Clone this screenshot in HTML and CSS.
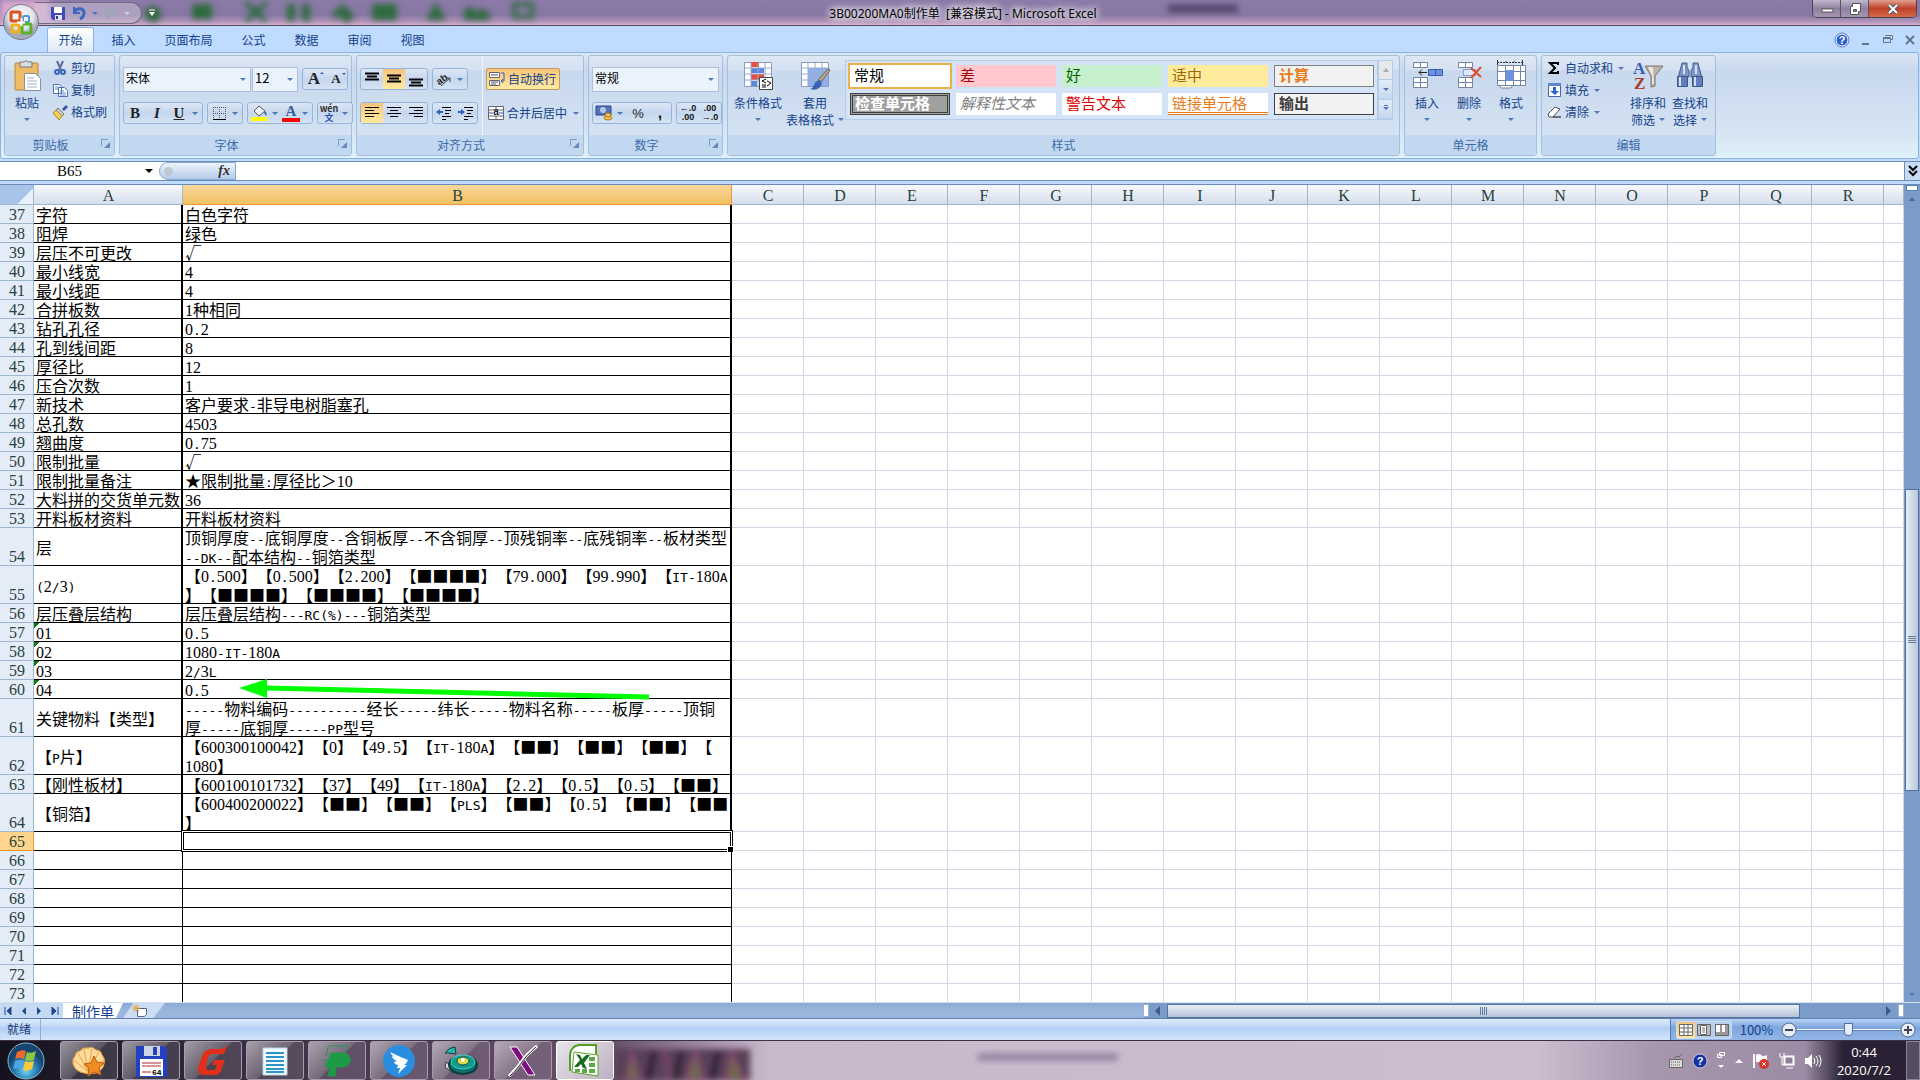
FILE: index.html
```html
<!DOCTYPE html>
<html lang="zh-CN">
<head>
    <meta charset="UTF-8">
    <meta name="viewport" content="width=device-width, initial-scale=1.0">
    <title>3B00200MA0制作单 [兼容模式] - Microsoft Excel</title>
    <link rel="stylesheet" href="styles.css">
</head>
<body>
    <header class="titlebar">
        <svg class="glass" width="1300" height="25" aria-hidden="true">
            <defs><filter id="soft" x="-20%" y="-50%" width="140%" height="200%"><feGaussianBlur stdDeviation="3"/></filter></defs>
            <g filter="url(#soft)">
                <path d="M0 0h50v25h-50z" fill="#d9a9cf"/>
                <g fill="#2d6b3c">
                    <circle cx="153" cy="14" r="8"/><path d="M192 4h20v15h-20z"/><path d="M246 3l20 18M266 3l-20 18" stroke="#2d6b3c" stroke-width="5"/>
                    <path d="M287 4h8v17h-8zM302 4h8v17h-8z"/><path d="M332 14l10-10 12 10-4 8h-6l-4-8-4 6z"/>
                    <path d="M372 4h25v16h-25z"/><path d="M426 20l10-18 10 18z"/><path d="M464 20v-10l6-4 6 6 6-4 8 6v6z"/>
                </g>
                <path d="M514 4h18v13h-18z" fill="none" stroke="#2d6b3c" stroke-width="4"/>
                <path d="M1168 5h70v7h-70z" fill="#4d4164"/>
            </g>
        </svg>
        <div class="quick">
            <button aria-label="保存"><svg width="16" height="16"><path d="M1 2h14v13H3l-2-2z" fill="#4448b8"/><path d="M4 2h8v6H4z" fill="#fff"/><path d="M5 10h7v5H5z" fill="#dfe4f4"/><path d="M6 11h2v3H6z" fill="#333a90"/></svg></button>
            <button aria-label="撤消"><svg width="16" height="16"><path d="M3 2v6h6" fill="none" stroke="#3c66c4" stroke-width="2"/><path d="M3 7c3-5 10-4 10 1 0 3-2 5-4 6" fill="none" stroke="#3c66c4" stroke-width="3"/></svg></button>
            <i class="arrow"></i>
            <button aria-label="恢复"><svg width="16" height="16"><path d="M12 2v6H6" fill="none" stroke="#9aa8b8" stroke-width="2"/><path d="M12 7C9 2 3 3 3 8c0 3 2 5 4 6" fill="none" stroke="#9aa8b8" stroke-width="2"/></svg></button>
            <i class="arrow pale"></i>
        </div>
        <button class="more" aria-label="自定义快速访问工具栏"><svg width="8" height="8"><path d="M1 1h6" stroke="#fff"/><path d="M1 3h6l-3 4z" fill="#fff"/></svg></button>
        <h1>3B00200MA0制作单&nbsp; [兼容模式] - Microsoft Excel</h1>
        <div class="winbtns">
            <button aria-label="最小化"><svg width="14" height="14"><rect x="2" y="7" width="11" height="3" fill="#fff" stroke="#555"/></svg></button>
            <button aria-label="还原"><svg width="14" height="14"><path d="M4.500 1.500h8v8h-2v3h-8v-8h2z" fill="#fff" stroke="#555"/><path d="M5.500 7.500h3v2h-3z" fill="#888" stroke="#555"/></svg></button>
            <button class="close" aria-label="关闭"><svg width="14" height="14"><path d="M3 3l8 8M11 3l-8 8" stroke="#555" stroke-width="4"/><path d="M3 3l8 8M11 3l-8 8" stroke="#fff" stroke-width="2"/></svg></button>
        </div>
    </header>
    <button class="office" aria-label="Office 按钮">
        <svg width="38" height="38" viewBox="0 0 38 38">
            <defs><radialGradient id="orb" cy=".35"><stop offset="0" stop-color="#fff"/><stop offset=".7" stop-color="#e3e5ec"/><stop offset="1" stop-color="#a7abb8"/></radialGradient></defs>
            <circle cx="19" cy="19" r="17.500" fill="url(#orb)" stroke="#737a8c"/>
            <g fill="none" stroke-width="3">
                <rect x="9" y="9" width="9" height="9" rx="1" stroke="#d9541e"/>
                <rect x="21" y="13" width="6" height="6" rx="1" stroke="#4b9bd8" stroke-width="2"/>
                <rect x="10" y="22" width="7" height="7" rx="1" stroke="#f0b01c"/>
                <rect x="20" y="21" width="9" height="9" rx="1" stroke="#5fae2c"/>
            </g>
            <path d="M15 19.500h8M19.500 15v8" stroke="#fff" stroke-width="2"/>
        </svg>
    </button>
    <nav class="tabs">
        <button class="active">开始</button>
        <button>插入</button>
        <button class="wide">页面布局</button>
        <button>公式</button>
        <button>数据</button>
        <button>审阅</button>
        <button>视图</button>
        <div class="docbtns">
            <button aria-label="帮助"><svg width="16" height="16"><circle cx="8" cy="8" r="6" fill="#2a5fd0" stroke="#fff"/><circle cx="8" cy="8" r="7" fill="none" stroke="#5b7fc0"/><text x="8" y="12" text-anchor="middle">?</text></svg></button>
            <button aria-label="最小化窗口"><svg width="12" height="12"><path d="M2 9h7v2H2z" fill="#66758c"/></svg></button>
            <button aria-label="还原窗口"><svg width="12" height="12"><path d="M3.500 2v-.5h7v4h-2M1.500 3.500h7v5h-7zM1 4.500h8" fill="none" stroke="#66758c"/></svg></button>
            <button aria-label="关闭窗口"><svg width="12" height="12"><path d="M2 2l8 8M10 2l-8 8" stroke="#66758c" stroke-width="2"/></svg></button>
        </div>
    </nav>

    <section class="ribbon">
        <div class="group clipboard">
            <div class="tools">
                <button class="big"><svg width="30" height="32"><rect x="3" y="3" width="23" height="27" rx="1" fill="#eebb66" stroke="#b8863c"/><path d="M8 2h4q2-3 4 0h4v5H8z" fill="#ddd" stroke="#777"/><path d="M12.500 13.500h11l5 5v12h-16z" fill="#fff" stroke="#8490a8"/><path d="M15 18h7M15 21h10M15 24h10M15 27h10" stroke="#9fb0cc"/></svg><span>粘贴</span><i class="arrow"></i></button>
                <div class="stack">
                    <button><svg width="16" height="16"><path d="M5 1l4 9M11 1L7 10" stroke="#5c6f94" stroke-width="2"/><circle cx="5" cy="12" r="2" fill="none" stroke="#3a66b8" stroke-width="2"/><circle cx="11" cy="12" r="2" fill="none" stroke="#3a66b8" stroke-width="2"/></svg>剪切</button>
                    <button><svg width="16" height="16"><path d="M1.500 2.500h6l2 2v7h-8zM6.500 5.500h6l3 3v6h-9z" fill="#fff" stroke="#4c70b4"/><path d="M3 5h4M3 7h3M8 9h4M8 11h6M8 13h6" stroke="#5c8ad0"/></svg>复制</button>
                    <button><svg width="16" height="16"><path d="M10 5l4-4 2 2-4 4z" fill="#3c50a0"/><path d="M6 4l6 6-2 2-6-6z" fill="#ccc" stroke="#777"/><path d="M4 6l6 6-3 4-6-7z" fill="#f2cf58" stroke="#a98a2c"/></svg>格式刷</button>
                </div>
            </div>
            <footer class="more-opts">剪贴板<i class="launch"></i></footer>
        </div>
        <div class="group font">
            <div class="tools lines">
                <div class="line">
                    <span class="combo name"><select aria-label="字体"><option>宋体</option></select></span>
                    <span class="combo size"><select aria-label="字号"><option>12</option></select></span>
                    <span class="set"><button class="serif grow" aria-label="增大字号">A<i class="tip up"></i></button><button class="serif shrink" aria-label="减小字号">A<i class="tip"></i></button></span>
                </div>
                <div class="line">
                    <span class="set biu"><button class="serif">B</button><button class="serif it">I</button><button class="serif un">U</button><i class="arrow"></i></span>
                    <span class="set"><button aria-label="边框"><svg width="16" height="16"><path d="M2 2.500h13M2 8.500h13M2.500 2v12M8.500 2v12M14.500 2v12" stroke="#555" stroke-dasharray="1 1"/><path d="M2 14.500h13" stroke="#000"/></svg></button><i class="arrow"></i></span>
                    <span class="set"><button aria-label="填充颜色"><svg width="18" height="16"><path d="M4 6l5-5 6 5-6 5z" fill="#eef2fa" stroke="#555"/><path d="M14 6q4 1 2 5l-2-3z" fill="#3f6fc4"/><path d="M1 12h16v4H1z" fill="#ff0"/></svg></button><i class="arrow"></i><button class="serif color" aria-label="字体颜色">A</button><i class="arrow"></i></span>
                    <span class="set"><button class="wen" aria-label="拼音"><b>wén</b><b>文</b></button><i class="arrow"></i></span>
                </div>
            </div>
            <footer class="more-opts">字体<i class="launch"></i></footer>
        </div>
        <div class="group align">
            <div class="tools">
                <div class="lines">
                    <div class="line">
                        <span class="set"><button aria-label="顶端对齐"><svg width="16" height="16"><path d="M1 2.500h14M3 5.500h10M1 8.500h14" stroke="#000" stroke-width="2"/></svg></button><button class="on" aria-label="垂直居中"><svg width="16" height="16"><path d="M1 4.500h14M3 7.500h10M1 10.500h14" stroke="#000" stroke-width="2"/></svg></button><button aria-label="底端对齐"><svg width="16" height="16"><path d="M1 8.500h14M3 11.500h10M1 14.500h14" stroke="#000" stroke-width="2"/></svg></button></span>
                        <span class="set"><button aria-label="方向"><svg width="18" height="16"><text x="1" y="11" class="ab" transform="rotate(-35 8 8)">ab</text><path d="M6 15l9-8M15 7v4M15 7h-4" stroke="#444" fill="none"/></svg></button><i class="arrow"></i></span>
                    </div>
                    <div class="line">
                        <span class="set"><button class="on" aria-label="左对齐"><svg width="16" height="16"><path d="M1 2.500h14M1 5.500h9M1 8.500h14M1 11.500h9" stroke="#000"/></svg></button><button aria-label="居中"><svg width="16" height="16"><path d="M1 2.500h14M4 5.500h8M1 8.500h14M4 11.500h8" stroke="#000"/></svg></button><button aria-label="右对齐"><svg width="16" height="16"><path d="M1 2.500h14M6 5.500h9M1 8.500h14M6 11.500h9" stroke="#000"/></svg></button></span>
                        <span class="set"><button aria-label="减少缩进"><svg width="16" height="16"><path d="M6 2.500h9M9 5.500h6M9 8.500h4M6 11.500h9M6 14.500h4" stroke="#000"/><path d="M0 7l4-3v6zM4 6h3v2H4z" fill="#2d5fc0"/></svg></button><button aria-label="增加缩进"><svg width="16" height="16"><path d="M6 2.500h9M9 5.500h6M9 8.500h4M6 11.500h9M6 14.500h4" stroke="#000"/><path d="M7 7L3 4v6zM0 6h3v2H0z" fill="#2d5fc0"/></svg></button></span>
                    </div>
                </div>
                <div class="lines texts">
                    <button class="on"><svg width="16" height="16"><path d="M.5 1.500h10v5H.5zM.5 9.500h10v5H.5z" fill="#fff" stroke="#667"/><path d="M2 4h7M2 11h7M2 13h5" stroke="#555"/><path d="M12 2h3v8h-3M14 8l-2 2 2 2" fill="none" stroke="#2d5fc0"/></svg>自动换行</button>
                    <button><svg width="16" height="16"><path d="M.5 1.500h15v13H.5zM.5 5h15M.5 11h15M8 1v4M8 11v4" fill="#fff" stroke="#667"/><path d="M1 8h4M15 8h-4" stroke="#2d5fc0"/><text x="8" y="10" text-anchor="middle" class="ab">a</text></svg>合并后居中<i class="arrow"></i></button>
                </div>
            </div>
            <footer class="more-opts">对齐方式<i class="launch"></i></footer>
        </div>
        <div class="group number">
            <div class="tools lines">
                <div class="line"><span class="combo"><select aria-label="数字格式"><option>常规</option></select></span></div>
                <div class="line">
                    <span class="set"><button aria-label="会计数字格式"><svg width="18" height="16"><path d="M1 1h15v9H1z" fill="#5574b8" stroke="#2c4684"/><circle cx="8" cy="5" r="3" fill="#b7c6e8"/><ellipse cx="13" cy="13" rx="4" ry="2" fill="#f3c64c" stroke="#a87920"/><ellipse cx="13" cy="10" rx="3" ry="2" fill="#f3c64c" stroke="#a87920"/></svg></button><i class="arrow"></i><button class="pct">%</button><button class="comma">,</button></span>
                    <span class="set"><button class="dec"><b>←.0</b><b>.00</b></button><button class="dec"><b>.00</b><b>→.0</b></button></span>
                </div>
            </div>
            <footer class="more-opts">数字<i class="launch"></i></footer>
        </div>
        <div class="group styles">
            <div class="tools">
                <button class="big"><svg width="32" height="32"><path d="M2.500 2.500h27v24h-27z" fill="#fff" stroke="#8a9cc0"/><path d="M9 2h8v5H9zM9 14h13v6H9z" fill="#e8503c"/><path d="M9 8h13v5H9zM9 21h6v5H9z" fill="#5b84dc"/><path d="M3 8h26M3 14h26M3 20h26M9 3v23M16 3v23M23 3v23" stroke="#9aaccc"/><path d="M17.500 17.500h13v12h-13z" fill="#fff" stroke="#444"/><path d="M24 19l-4 2 4 2M20 25h4M20 27h4M25 21l4 2-4 3" fill="none" stroke="#000"/></svg><span>条件格式</span><i class="arrow"></i></button>
                <button class="big"><svg width="32" height="32"><path d="M2.500 2.500h27v24h-27z" fill="#fff" stroke="#8a9cc0"/><path d="M9 8h20v18H9z" fill="#8fb0ec"/><path d="M3 8h26M3 14h26M3 20h26M9 3v23M16 3v23M23 3v23" stroke="#9aaccc"/><path d="M31 10l-9 12-3-2 10-11z" fill="#c9a77c" stroke="#666"/><path d="M21 20q-5 1-6 5-1 3-4 4 8 3 12-5z" fill="#3a63b4"/></svg><span>套用</span><span>表格格式<i class="arrow"></i></span></button>
                <div class="gallery">
                    <button class="normal">常规</button><button class="bad">差</button><button class="good">好</button><button class="neutral">适中</button><button class="calc">计算</button>
                    <button class="check">检查单元格</button><button class="explain">解释性文本</button><button class="warn">警告文本</button><button class="linked">链接单元格</button><button class="output">输出</button>
                </div>
                <div class="galnav"><button aria-label="上一行"><i class="arrow up"></i></button><button aria-label="下一行"><i class="arrow"></i></button><button aria-label="其他"><i class="arrow bar"></i></button></div>
            </div>
            <footer>样式</footer>
        </div>
        <div class="group cells">
            <div class="tools">
                <button class="big"><svg width="32" height="32"><path d="M2.500 2.500h14v5h-14zM2.500 17.500h14v10h-14zM2.500 22.500h14M9.500 2v5M9.500 18v9" fill="#fff" stroke="#7584a0"/><path d="M17.500 9.500h14v6h-14zM24.500 10v6" fill="#6d90e0" stroke="#3a5cac"/><path d="M8 12.500h8M8 12.500l3-3M8 12.500l3 3" stroke="#222"/></svg><span>插入</span><i class="arrow"></i></button>
                <button class="big"><svg width="32" height="32"><path d="M5.500 2.500h14v5h-14zM5.500 17.500h14v10h-14zM5.500 22.500h14M12.500 2v5M12.500 18v9" fill="#fff" stroke="#7584a0"/><path d="M10.500 9.500h12v6h-12z" fill="#dfe8fa" stroke="#3a5cac" stroke-dasharray="1 1"/><path d="M18 8l10 9M28 7L18 18" stroke="#e04a30" stroke-width="2"/></svg><span>删除</span><i class="arrow"></i></button>
                <button class="big"><svg width="32" height="32"><path d="M2.500 5.500h28v20h-28zM2 11.500h28M2 20.500h28M10.500 5v20M18.500 5v20M25.500 5v20M4 25l2 3h10l2-3" fill="#fff" stroke="#7584a0"/><path d="M11 10h8v11h-8z" fill="#6d90e0"/><path d="M2 2.500h26M2.500 0v5M27.500 0v5M10 2.500l2-2M20 2.500l-2-2" stroke="#333" stroke-dasharray="2 1"/></svg><span>格式</span><i class="arrow"></i></button>
            </div>
            <footer>单元格</footer>
        </div>
        <div class="group edit">
            <div class="tools">
                <div class="stack">
                    <button><svg width="16" height="16"><path d="M12 5V3H4l5 5-5 5h8v-2" fill="none" stroke="#000" stroke-width="2"/></svg>自动求和<i class="arrow"></i></button>
                    <button><svg width="16" height="16"><path d="M2.500 1.500h12v13h-12z" fill="#fff" stroke="#4467a8"/><path d="M2 1h13v3H2z" fill="#5d86cf"/><path d="M7 5h3v4h3l-4 4-5-4h3z" fill="#2e62d0"/></svg>填充<i class="arrow"></i></button>
                    <button><svg width="16" height="16"><path d="M2 10l7-7 5 2-7 8H3z" fill="#fff" stroke="#555"/><path d="M7 13h8" stroke="#000"/></svg>清除<i class="arrow"></i></button>
                </div>
                <button class="big"><svg width="32" height="32"><path d="M13 6h18l-8 10v10l-4 1V16z" fill="#b9b5ac" stroke="#77736c"/><path d="M16 7h5l1 17h-2V16z" fill="#e9e6df"/><text x="1" y="14" class="az">A</text><text x="2" y="29" class="az red">Z</text></svg><span>排序和</span><span>筛选<i class="arrow"></i></span></button>
                <button class="big"><svg width="32" height="32"><path d="M8 3h5v4l2 4v6h-4l-7 1 3-11zM24 3h-5v4l-2 4v6h4l7 1-3-11z" fill="#7d95c6" stroke="#45608f"/><path d="M3.500 16.500h10v10h-10zM18.500 16.500h10v10h-10z" fill="#5f7db8" stroke="#3c5588"/><path d="M6 17v9M21 17v9M10 5v9M22 5v9" stroke="#d4def4" stroke-width="2"/></svg><span>查找和</span><span>选择<i class="arrow"></i></span></button>
            </div>
            <footer>编辑</footer>
        </div>
    </section>

    <div class="formula">
        <input class="namebox" value="B65" aria-label="名称框"><i class="arrow black"></i>
        <div class="fx"><i class="knob"></i><button>fx</button></div>
        <input class="entry" aria-label="编辑栏">
        <button class="expand" aria-label="展开编辑栏"><svg width="10" height="12"><path d="M1 1l4 4 4-4M1 6l4 4 4-4" fill="none" stroke="#000" stroke-width="2"/></svg></button>
    </div>

    <main class="workspace">
        <div class="sheet">
            <table>
                <colgroup id="cols"></colgroup>
                <thead><tr id="heads"></tr></thead>
                <tbody id="rows"></tbody>
            </table>
            <svg class="note" width="420" height="30" aria-hidden="true"><path d="M28 11L411 20" stroke="#0f0" stroke-width="5"/><path d="M1 11L29 2v19z" fill="#0f0"/></svg>
        </div>
        <div class="vscroll">
            <i class="split"></i>
            <button aria-label="向上滚动"><i class="arrow up"></i></button>
            <div class="track"><div class="thumb"><svg width="8" height="8"><path d="M0 .5h8M0 2.500h8M0 4.500h8M0 6.500h8" stroke="#667c9c"/></svg></div></div>
            <button aria-label="向下滚动"><i class="arrow"></i></button>
        </div>
    </main>

    <div class="sheetbar">
        <div class="sheetnav">
            <button aria-label="第一张"><svg width="8" height="8"><path d="M1 0v8M7 0L3 4l4 4z" fill="#1f4a8c" stroke="#1f4a8c"/></svg></button>
            <button aria-label="上一张"><svg width="8" height="8"><path d="M6 0L2 4l4 4z" fill="#1f4a8c"/></svg></button>
            <button aria-label="下一张"><svg width="8" height="8"><path d="M2 0l4 4-4 4z" fill="#1f4a8c"/></svg></button>
            <button aria-label="最后一张"><svg width="8" height="8"><path d="M7 0v8M1 0l4 4-4 4z" fill="#1f4a8c" stroke="#1f4a8c"/></svg></button>
        </div>
        <button class="sheettab">制作单</button>
        <button class="newtab" aria-label="插入工作表"><svg width="16" height="14"><path d="M5.500 4.500h9v6l-2 2h-7z" fill="#fff" stroke="#55688c"/><path d="M4 0v8M0 4h8M1 1l6 6M7 1L1 7" stroke="#eaa52c"/></svg></button>
        <div class="hscroll">
            <i class="split"></i>
            <button aria-label="向左滚动"><svg width="8" height="10"><path d="M6 0L1 5l5 5z" fill="#3d5a88"/></svg></button>
            <div class="track"><div class="thumb"><svg width="8" height="8"><path d="M.5 0v8M2.500 0v8M4.500 0v8M6.500 0v8" stroke="#667c9c"/></svg></div></div>
            <button aria-label="向右滚动"><svg width="8" height="10"><path d="M1 0l5 5-5 5z" fill="#3d5a88"/></svg></button>
            <i class="split"></i>
        </div>
    </div>

    <div class="status">
        <span class="ready">就绪</span>
        <div class="zoom">
            <div class="views">
                <button class="on" aria-label="普通"><svg width="14" height="12"><path d="M.5.5h13v11H.5zM0 4h14M0 8h14M5 0v12M9 0v12" fill="#fff" stroke="#666"/></svg></button>
                <button aria-label="页面布局"><svg width="14" height="12"><path d="M.5.5h13v11H.5z" fill="#bbb" stroke="#666"/><path d="M3.500 1.500h6v9h-6z" fill="#fff" stroke="#666"/><path d="M5 4h3M5 6h3M5 8h3" stroke="#777"/></svg></button>
                <button aria-label="分页预览"><svg width="14" height="12"><path d="M.5.5h13v11H.5z" fill="#999" stroke="#666"/><path d="M1 1h4v7H1zM7 1h3v7H7z" fill="#fff"/></svg></button>
            </div>
            <button class="percent">100%</button>
            <button aria-label="缩小"><svg width="16" height="16"><circle cx="8" cy="8" r="7" fill="#e8eef8" stroke="#50668c"/><path d="M4 8h8" stroke="#445" stroke-width="2"/></svg></button>
            <input type="range" min="10" max="190" value="100" aria-label="显示比例">
            <button aria-label="放大"><svg width="16" height="16"><circle cx="8" cy="8" r="7" fill="#e8eef8" stroke="#50668c"/><path d="M4 8h8M8 4v8" stroke="#445" stroke-width="2"/></svg></button>
        </div>
    </div>

    <footer class="taskbar">
        <button class="start" aria-label="开始"><svg width="40" height="40">
            <defs><radialGradient id="ball" cy=".75"><stop offset="0" stop-color="#6fdcf8"/><stop offset=".6" stop-color="#2a7db4"/><stop offset="1" stop-color="#16456f"/></radialGradient></defs>
            <circle cx="20" cy="20" r="18" fill="url(#ball)" stroke="#8db8cf"/>
            <path d="M11 11q5-3 9-1l-2 8q-4-2-9 0z" fill="#ee6a2c"/><path d="M21 11q4 2 9-1l-2 9q-5 2-9 0z" fill="#8cc63e"/>
            <path d="M9 20q4-2 9 0l-2 8q-5-2-9 0z" fill="#4ea6e8"/><path d="M19 20q4 2 9 0l-2 8q-5 3-9 1z" fill="#fbcb3a"/>
        </svg></button>
        <button class="app" aria-label="贝壳"><svg width="36" height="34"><path d="M9 28Q3 25 2 20 1 15 4 12 5 7 9 7 12 3 17 4q5-2 8 2 5 0 6 5 4 4 2 9-1 6-8 9l-8 1z" fill="#fddb9a" stroke="#e59a3a"/><path d="M17 28L3 16M17 28L7 9M17 28L13 5M17 28L21 5M17 28L28 8M17 28L33 16" stroke="#e9a44c"/><path d="M23 12l3 6 7 1-5 5 2 7-7-3-6 4 1-8-5-4 7-1z" fill="#f08a24" stroke="#b95a0c"/></svg></button>
        <button class="app" aria-label="存盘"><svg width="34" height="34"><path d="M2 2h28l3 3v28H2z" fill="#2340c0"/><path d="M10 2h16v10H10z" fill="#ccd4e4"/><path d="M19 3h4v8h-4z" fill="#2340c0"/><path d="M6 15h23v17H6z" fill="#fff"/><path d="M8 19h19M8 22h19M8 28h9" stroke="#b5282c"/><text x="18" y="31" class="tiny">64</text></svg></button>
        <button class="app" aria-label="G"><svg width="36" height="34"><path d="M32 2l-3 8H18q-4 0-5 4l-2 9q0 3 3 3h6l2-5h-5l2-5h11l-4 11q-2 4-6 4H8q-6-1-5-7l4-12Q9 5 17 5h9z" fill="#e0301c"/></svg></button>
        <button class="app" aria-label="文档"><svg width="30" height="34"><path d="M3 4h24v27H3z" fill="#f4fbff" stroke="#b9d4e4"/><path d="M6 9h18M6 13h18M6 17h18M6 21h18M6 25h18M6 28h18" stroke="#2b93c8" stroke-width="2"/></svg></button>
        <button class="app" aria-label="P"><svg width="36" height="34"><path d="M9 2h20l-1 5" fill="none" stroke="#1d9a48"/><path d="M9 3l-2 9" stroke="#1d9a48"/><path d="M12 9h13q8 2 6 9-3 6-10 5h-4l-1 9h-7l2-9H6M4 16h12M5 20h12" fill="#1d9a48" stroke="#1d9a48"/></svg></button>
        <button class="app" aria-label="飞鸟"><svg width="36" height="36"><circle cx="18" cy="18" r="16" fill="#2a8de0"/><path d="M9 9q10 5 18 8-1 3-4 5h3l-9 9 2-6h-3l1-3q-4-1-4-3l3-1q-5-2-5-5l3 1q-4-2-5-5z" fill="#fff"/></svg></button>
        <button class="app" aria-label="圆盘"><svg width="36" height="34"><path d="M3 18l-1 5 8 6 4-3z" fill="#ddd" stroke="#333"/><ellipse cx="20" cy="21" rx="14" ry="9" fill="#0f6e6c" stroke="#053d40" stroke-width="2"/><ellipse cx="20" cy="18" rx="12" ry="7" fill="#149a8e" stroke="#3fd4c4"/><ellipse cx="20" cy="17" rx="6" ry="4" fill="#d9d944" stroke="#145"/><ellipse cx="20" cy="16" rx="2" ry="2" fill="#fff"/><path d="M2 9Q6 3 12 3l1 7-8-1z" fill="#27b5aa" stroke="#053d40"/></svg></button>
        <button class="app" aria-label="X"><svg width="36" height="36"><path d="M5 4h7l18 28h-7z" fill="#7b0b7e" stroke="#fff"/><path d="M32 3Q20 13 17 18T4 33" fill="none" stroke="#fff" stroke-width="3"/><path d="M31 4Q20 14 17 19T5 33" fill="none" stroke="#222"/></svg></button>
        <button class="app current" aria-label="Excel"><svg width="36" height="36"><path d="M3 28V12Q4 3 12 2h17v9" fill="#fff" stroke="#54a024" stroke-width="2"/><path d="M7 9l24 3v21L5 29z" fill="#fff" stroke="#54a024"/><path d="M9 11l4 1 2 4 4-4h4l-6 8 3 6-4-1-2-4-3 3H7l6-7z" fill="#1d6b22"/><path d="M22 14h6v4h-6zM22 20h6v4h-6zM22 26h6v4h-6zM15 26h5v4h-5zM8 26h5v3H8z" fill="#5caa4c"/></svg></button>
        <div class="desk"><svg width="142" height="39"><g filter="url(#soft)"><path d="M0 8h136v31H0z" fill="#594057"/><path d="M12 39l6-28 8 28zM50 8l5 31M72 39l10-28 7 28zM112 39l6-28 12 28z" fill="#6d6c4a" stroke="#84486f" stroke-width="3"/><path d="M34 39l6-28M98 39l6-28M62 39l5-28" stroke="#2b1c34" stroke-width="6"/></g></svg></div>
        <div class="haze"><svg width="190" height="30"><path d="M24 12h140v8H24z" fill="#9685a2" filter="url(#soft)"/></svg></div>
        <div class="tray">
            <svg width="16" height="16"><path d="M1.500 6.500h13v8h-13z" fill="#ddd" stroke="#666"/><path d="M3 9h10M3 12h10" stroke="#555" stroke-dasharray="1 1"/><path d="M6 5l3-2 2 1 3-3" fill="none" stroke="#666"/></svg>
            <svg width="16" height="16"><circle cx="8" cy="8" r="7" fill="#1530a0" stroke="#ccd"/><text x="8" y="12" text-anchor="middle">?</text></svg>
            <svg width="10" height="20"><path d="M3.500 1.500h5v3h-5zM1.500 3.500h4v3h-4z" fill="#a797ac" stroke="#fff"/><path d="M2 14h6l-3 3z" fill="#fff"/></svg>
            <svg width="10" height="10"><path d="M1 7l4-4 4 4z" fill="#fff"/></svg>
            <svg width="18" height="18"><path d="M2 2v14" stroke="#fff" stroke-width="2"/><path d="M4 3q3-2 5 0t6 0v7H4z" fill="#fff"/><circle cx="12" cy="12" r="5" fill="#d8342c"/><path d="M10 10l4 4M14 10l-4 4" stroke="#fff"/></svg>
            <svg width="18" height="18"><path d="M6.500 4.500h9v8h-9z" fill="#8d7f94" stroke="#fff" stroke-width="2"/><path d="M8 16h7M2 1v4h4V1M4 5v8h3" fill="none" stroke="#fff"/></svg>
            <svg width="18" height="18"><path d="M1 6h3l4-4v14l-4-4H1z" fill="#fff"/><path d="M10 6q2 3 0 6M12 4q4 5 0 10M15 3q4 6 0 12" fill="none" stroke="#fff"/></svg>
            <time>0:44<br>2020/7/2</time>
            <button class="showdesk" aria-label="显示桌面"></button>
        </div>
    </footer>
    <script src="script.js"></script>
</body>
</html>
```
FILE: styles.css
```css
* {
    box-sizing: border-box;
}

body {
    margin: 0;
    height: 100vh;
    display: flex;
    flex-direction: column;
    overflow: hidden;
    position: relative;
    background: #bfdbff;
    color: #15428b;
    font-family: "Noto Sans CJK SC", sans-serif;
    font-size: 12px;
    line-height: 16px;
}

button, input, select {
    font: inherit;
    color: inherit;
    margin: 0;
    padding: 0;
    border: 0;
    background: none;
    outline: none;
    border-radius: 0;
}

button {
    display: flex;
    align-items: center;
    justify-content: center;
    white-space: nowrap;
}

svg {
    display: block;
    flex: none;
}

.arrow {
    flex: none;
    border: 3px solid transparent;
    border-top: 3px solid #4f78b8;
    border-bottom: 0;
}

.arrow.up {
    border-top: 0;
    border-bottom: 4px solid #4c6a98;
}

.arrow.pale {
    border-top-color: #cdd3dd;
}

/* title bar */
.titlebar {
    height: 26px;
    flex: none;
    position: relative;
    display: flex;
    background: linear-gradient(#8c7aa8, #8677a3 60%, #b898bd 90%, #d9b6cc);
    border-bottom: 1px solid #4f4a60;
}

.glass {
    position: absolute;
    left: 0;
    top: 0;
}

.quick {
    position: relative;
    width: 107px;
    height: 22px;
    margin: 2px 0 0 35px;
    padding-left: 15px;
    display: flex;
    align-items: center;
    gap: 5px;
    border: 1px solid #6f6c7c;
    border-left: 0;
    border-radius: 0 11px 11px 0;
    background: rgba(210, 200, 220, .5);
}

.more {
    position: relative;
    margin-left: 6px;
}

.titlebar h1 {
    position: relative;
    flex: 1;
    margin: 0;
    padding-right: 42px;
    text-align: center;
    font-size: 12px;
    font-weight: 400;
    font-family: "Noto Sans", "Noto Sans CJK SC", sans-serif;
    line-height: 27px;
    color: #000;
    text-shadow: 0 0 6px #fff, 0 0 8px #fff, 0 0 10px #fff;
}

.winbtns {
    display: flex;
    height: 18px;
    margin-right: 3px;
    border: 1px solid #4a4358;
    border-top: 0;
    border-radius: 0 0 5px 5px;
    overflow: hidden;
}

.winbtns button {
    width: 28px;
    background: linear-gradient(#c3b7cf, #8f82a0 50%, #a597b2);
    border-right: 1px solid #5a5268;
}

.winbtns .close {
    width: 47px;
    border: 0;
    background: linear-gradient(#e0a08e, #c0402a 50%, #d46a48);
}

.office {
    position: absolute;
    left: 2px;
    top: 3px;
}

/* ribbon tabs */
.tabs {
    height: 26px;
    flex: none;
    display: flex;
    padding: 1px 4px 0 47px;
}

.tabs > button {
    width: 47px;
    margin-right: 6px;
    border-radius: 3px 3px 0 0;
}

.tabs > .wide {
    width: 71px;
}

.tabs > .active {
    background: linear-gradient(#fff, #dfeaf7);
    border: 1px solid #8db2e3;
    border-bottom: 0;
}

.docbtns {
    margin-left: auto;
    display: flex;
    align-items: center;
    gap: 10px;
}

.docbtns text, .tray text {
    font: bold 11px "Liberation Sans", sans-serif;
    fill: #fff;
}

/* ribbon */
.ribbon {
    height: 107px;
    flex: none;
    display: flex;
    gap: 4px;
    margin: 0 1px 2px 0;
    padding: 2px 3px;
    border: 1px solid #8db2e3;
    border-radius: 3px;
    background: linear-gradient(#dbe6f4, #c7d8ed 18%, #c9d9ee 22%, #d8e6f4 80%, #dff2fb);
}

.group {
    display: flex;
    flex-direction: column;
    border: 1px solid #a3bfdd;
    border-radius: 3px;
    background: linear-gradient(#dde8f5, #d4e1f0 14%, #c8d8ed 15%, #d7e5f4);
}

.group footer {
    position: relative;
    height: 20px;
    line-height: 20px;
    text-align: center;
    color: #3e6aaa;
    background: #c1d8f0;
}

.group .more-opts {
    padding-right: 18px;
}

.launch {
    position: absolute;
    right: 6px;
    top: 4px;
    width: 7px;
    height: 7px;
    border: 1px solid #7a9cc8;
    border-right: 0;
    border-bottom: 0;
}

.launch::after {
    content: "";
    position: absolute;
    left: 2px;
    top: 2px;
    border: 3px solid #6788b8;
    border-top-color: transparent;
    border-left-color: transparent;
}

.clipboard {
    width: 111px;
}

.font {
    width: 233px;
}

.align {
    width: 228px;
}

.number {
    width: 135px;
}

.styles {
    width: 673px;
}

.cells {
    width: 133px;
}

.edit {
    width: 175px;
}

.tools {
    flex: 1;
    display: flex;
    padding: 0 3px;
}

.big {
    flex-direction: column;
    justify-content: flex-start;
    width: 42px;
    padding-top: 4px;
    line-height: 17px;
}

.big svg {
    margin-bottom: 2px;
}

.big span {
    display: flex;
    align-items: center;
    gap: 4px;
}

.big > .arrow {
    margin-top: 7px;
}

.cells .tools {
    padding-left: 1px;
}

.clipboard .big {
    width: 38px;
}

.stack {
    display: flex;
    flex-direction: column;
    align-items: flex-start;
    padding: 1px 0 0 6px;
}

.stack button {
    height: 22px;
    gap: 3px;
}

.stack .arrow {
    margin-left: 2px;
}

.edit .stack {
    width: 82px;
    padding-left: 1px;
}

.lines {
    display: flex;
    flex-direction: column;
    gap: 10px;
    padding-top: 11px;
}

.line {
    display: flex;
    align-items: center;
    gap: 4px;
    height: 24px;
}

.font .line:first-child {
    gap: 1px;
}

.combo {
    position: relative;
    flex: 1;
    height: 25px;
    border: 1px solid #abc1de;
    background: #eaf2fb;
}

.combo select {
    appearance: none;
    width: 100%;
    height: 23px;
    padding: 0 2px 2px;
    color: #000;
}

.combo::after {
    content: "";
    position: absolute;
    right: 4px;
    top: 10px;
    border: 3px solid transparent;
    border-top-color: #4f78b8;
}

.combo.size {
    flex: none;
    width: 46px;
    margin-right: 3px;
    font-size: 13px;
}

.set {
    display: flex;
    align-items: center;
    height: 22px;
    border: 1px solid #96b4da;
    border-radius: 3px;
    background: linear-gradient(#dce7f5, #c5d7ee 50%, #d5e3f4);
}

.set button {
    width: 22px;
    height: 20px;
}

.set .arrow {
    margin: 0 4px 0 2px;
}

.on {
    background: linear-gradient(#f8c27c, #fbd88e 50%, #ffe9a0);
}

.serif {
    position: relative;
    color: #222;
    font: bold 15px "Liberation Serif", serif;
}

.grow {
    font-size: 17px;
}

.shrink {
    font-size: 13px;
}

.tip {
    position: absolute;
    right: 1px;
    top: 4px;
    border: 2px solid transparent;
    border-top-color: #2d5ca8;
}

.tip.up {
    top: 1px;
    border-color: transparent transparent #2d5ca8;
}

.it {
    font-style: italic;
}

.un {
    text-decoration: underline;
}

.set .color {
    height: 18px;
    width: 18px;
    line-height: 14px;
    color: #3a5c9c;
    border-bottom: 4px solid #f00;
}

.set .wen {
    flex-direction: column;
    line-height: 9px;
    font-size: 9px;
    color: #333;
}

.wen b:last-child {
    color: #2d50c0;
}

.align .tools > .lines:first-child {
    padding-right: 4px;
    border-right: 1px solid #f2f7fd;
    margin-right: 3px;
}

.ab {
    font: bold 10px "Liberation Sans", sans-serif;
    fill: #222;
}

.az {
    font: bold 17px "Liberation Serif", serif;
    fill: #3a5cb4;
}

.az.red {
    fill: #a83a30;
}

.texts button {
    height: 22px;
    margin: 1px 0;
    padding: 0 3px 0 2px;
    gap: 3px;
    border-radius: 2px;
}

.texts button:first-child {
    align-self: flex-start;
    border: 1px solid #c09a60;
}

.texts .arrow {
    margin-left: 3px;
}

.set .pct, .set .comma {
    color: #222;
    font: 13px "Liberation Sans", sans-serif;
}

.set .comma {
    font-weight: bold;
    font-size: 16px;
}

.set .dec {
    flex-direction: column;
    font: 9px/9px "Liberation Sans", sans-serif;
    color: #111;
}

.styles .big {
    width: 54px;
}

.styles .big + .big {
    width: 60px;
}

/* cell style gallery */
.gallery {
    flex: 1;
    display: grid;
    grid-template-columns: repeat(5, 1fr);
    gap: 6px;
    height: 60px;
    margin-top: 4px;
    padding: 4px 3px 4px 4px;
    border: 1px solid #b4cce8;
    background: #d4e3f5;
}

.gallery button {
    justify-content: flex-start;
    height: 22px;
    padding-left: 4px;
    padding-bottom: 2px;
    font-size: 15px;
    background: #fff;
    color: #000;
}

.gallery .normal {
    outline: 2px solid #edb04a;
}

.gallery .bad {
    background: #ffc7ce;
    color: #9c0006;
}

.gallery .good {
    background: #c6efce;
    color: #006100;
}

.gallery .neutral {
    background: #ffeb9c;
    color: #9c6500;
}

.gallery .calc {
    background: #f2f2f2;
    border: 1px solid #7f7f7f;
    color: #e87c1c;
    font-weight: bold;
}

.gallery .check {
    background: #a0a0a0;
    border: 3px double #3f3f3f;
    padding-left: 2px;
    color: #fff;
    font-weight: bold;
}

.gallery .explain {
    color: #7f7f7f;
    font-style: italic;
}

.gallery .warn {
    color: #e00000;
}

.gallery .linked {
    color: #e87c1c;
    padding-bottom: 0;
    border-bottom: 3px double #e87c1c;
}

.gallery .output {
    background: #f2f2f2;
    border: 1px solid #3f3f3f;
    color: #3f3f3f;
    font-weight: bold;
}

.galnav {
    width: 15px;
    height: 60px;
    margin: 4px 3px 0 0;
    display: flex;
    flex-direction: column;
    border: 1px solid #b4cce8;
}

.galnav button {
    flex: 1;
    border-bottom: 1px solid #b4cce8;
    background: linear-gradient(#e2ecf9, #c5d8f0);
}

.galnav button:first-child {
    background: #e6e8ec;
}

.galnav .up {
    border-bottom-color: #a4acb8;
}

.galnav .bar {
    box-shadow: 0 -3px 0 -1px #4f78b8;
}

/* formula bar */
.formula {
    height: 20px;
    flex: none;
    display: flex;
    align-items: center;
    background: #fff;
    border-top: 1px solid #6a8cb8;
    border-bottom: 1px solid #6a8cb8;
}

.namebox {
    width: 145px;
    padding: 0 12px 0 6px;
    text-align: center;
    color: #000;
    font: 15px/18px "Liberation Serif", serif;
}

.arrow.black {
    border-width: 4px 4px 0;
    border-top-color: #000;
    margin-right: 6px;
}

.fx {
    width: 77px;
    height: 18px;
    display: flex;
    align-items: center;
    justify-content: space-between;
    padding: 0 5px 0 4px;
    border: 1px solid #8ba8d0;
    border-radius: 9px 0 0 9px;
    background: linear-gradient(#eef4fc, #b4cbea);
}

.fx button {
    color: #333;
    font: italic bold 14px "Liberation Serif", serif;
}

.knob {
    width: 9px;
    height: 9px;
    border-radius: 50%;
    background: #c0c8d6;
}

.entry {
    flex: 1;
    height: 18px;
    font-size: 15px;
}

.expand {
    width: 16px;
    height: 18px;
    background: #c8dcf4;
    border-left: 1px solid #6a8cb8;
}

/* worksheet */
.workspace {
    flex: 1;
    min-height: 0;
    display: flex;
    margin-top: 3px;
    border-top: 1px solid #6a8cb8;
}

.sheet {
    flex: 1;
    min-width: 0;
    position: relative;
    overflow: hidden;
    background: #fff;
}

.sheet table {
    width: 100%;
    table-layout: fixed;
    border-spacing: 0;
    color: #000;
    font-size: 16px;
    line-height: 19px;
    text-spacing-trim: space-all;
}

.c-num {
    width: 34px;
}

.c-a {
    width: 149px;
}

.c-b {
    width: 549px;
}

.c-std {
    width: 72px;
}

.sheet th {
    height: 19px;
    padding: 0;
    font: 16px/19px "Liberation Serif", serif;
    color: #27413e;
    text-align: center;
    vertical-align: bottom;
    background: #e4ecf7;
    box-shadow: inset -1px -1px #9eb6ce;
}

.sheet thead th {
    height: 20px;
    background: linear-gradient(#f7fafd, #d3dcea);
}

.sheet thead th:first-child {
    background: linear-gradient(135deg, #a9c4e9 68%, #e8f0fa 68%);
}

.sheet thead .sel {
    background: linear-gradient(#f8d79c, #f1c15f);
    box-shadow: inset 0 -1px #f29536, inset -1px 0 #f29536;
}

.sheet tbody .sel {
    background: #ffd58d;
    box-shadow: inset -1px -1px #f29536;
}

.sheet td {
    height: 19px;
    padding: 0 0 0 2px;
    white-space: nowrap;
    vertical-align: middle;
    box-shadow: inset -1px -1px #d0d7e5;
}

.sheet .double td {
    height: 38px;
}

.sheet td.box {
    position: relative;
    box-shadow: inset -1px -1px #000;
}

.sheet .filled td.box {
    box-shadow: inset 0 -1px #000, inset -2px 0 #000;
}

/* zero line height keeps the other faces from stretching the row */
.digits {
    font-family: "Liberation Serif", serif;
    font-size: 16px;
    line-height: 0;
}

.ascii {
    font-family: "DejaVu Sans Mono", monospace;
    font-size: 13px;
    line-height: 0;
}

/* green corner on numbers stored as text */
.sheet .astext {
    background: linear-gradient(135deg, #107c10 4px, transparent 4px);
}

.cursor::before {
    content: "";
    position: absolute;
    inset: -2px -1px -1px -2px;
    border: 1px solid #000;
    box-shadow: inset 0 0 0 1px #fff, inset 0 0 0 2px #000;
}

.cursor::after {
    content: "";
    position: absolute;
    right: -2px;
    bottom: -2px;
    width: 5px;
    height: 5px;
    background: #000;
    border: 1px solid #fff;
}

.note {
    position: absolute;
    left: 238px;
    top: 492px;
}

.vscroll {
    width: 16px;
    display: flex;
    flex-direction: column;
    align-items: center;
    background: #7b9bc9;
}

.vscroll .split {
    width: 12px;
    height: 6px;
    background: #fff;
    border: 1px solid #5e7fae;
}

.vscroll button {
    height: 16px;
}

.vscroll .track {
    flex: 1;
    width: 14px;
    display: flex;
    flex-direction: column;
}

.thumb {
    display: flex;
    align-items: center;
    justify-content: center;
    border: 1px solid #52719f;
}

.vscroll .thumb {
    margin-top: 282px;
    height: 302px;
    background: linear-gradient(90deg, #e8eef6, #b8c6da);
}

/* sheet tabs and horizontal scroll */
.sheetbar {
    height: 17px;
    flex: none;
    display: flex;
    align-items: stretch;
    background: linear-gradient(#8aa8d4, #9bb6dd 50%);
    border-top: 1px solid #d5e2f3;
    border-bottom: 1px solid #5f80b0;
}

.sheetnav {
    width: 63px;
    display: flex;
    align-items: center;
    justify-content: space-around;
    background: #c5d9f3;
}

.sheettab {
    width: 60px;
    background: #fff;
    font-size: 14px;
    line-height: 14px;
    clip-path: polygon(0 0, 100% 0, 88% 100%, 0 100%);
}

.newtab {
    width: 42px;
    padding-right: 8px;
    background: #cbdcf3;
    clip-path: polygon(25% 0, 100% 0, 72% 100%, 0 100%);
}

.hscroll {
    width: 777px;
    margin-left: auto;
    padding-right: 16px;
    display: flex;
    align-items: center;
    background: #7b9bc9;
}

.hscroll .split {
    width: 6px;
    height: 13px;
    background: #fff;
    border: 1px solid #9db4d6;
}

.hscroll button {
    width: 18px;
}

.hscroll .track {
    flex: 1;
    padding-right: 80px;
}

.hscroll .thumb {
    height: 14px;
    background: linear-gradient(#e8eef6, #b5c3d8);
}

/* status bar */
.status {
    height: 21px;
    flex: none;
    display: flex;
    background: linear-gradient(#dceaff, #c4d9f6 35%, #b1cef5 40%, #d5e5fa);
}

.ready {
    width: 41px;
    padding-left: 7px;
    line-height: 20px;
    border-right: 1px solid #8fb0dc;
    color: #1c3c78;
}

.zoom {
    width: 250px;
    margin-left: auto;
    padding: 0 4px 0 5px;
    display: flex;
    align-items: center;
    border-left: 1px solid #567db1;
    background: linear-gradient(#b8d2f6, #7fa6dd 40%, #93b6e6);
}

.views {
    display: flex;
    border: 1px solid #c8dcf6;
    border-radius: 2px;
    background: #b9cfee;
}

.views button {
    width: 18px;
    height: 16px;
}

.percent {
    width: 49px;
    font-size: 13px;
}

.zoom input {
    appearance: none;
    flex: 1;
    min-width: 0;
    height: 1px;
    background: #f2f7ff;
    box-shadow: 0 1px #6688b8;
}

.zoom input::-webkit-slider-thumb {
    appearance: none;
    width: 9px;
    height: 13px;
    border: 1px solid #4f6f9f;
    border-radius: 1px 1px 5px 5px;
    background: #e6eef9;
}

/* windows taskbar */
.taskbar {
    height: 40px;
    flex: none;
    display: flex;
    gap: 4px;
    overflow: hidden;
    border-top: 1px solid #3a3346;
    background: linear-gradient(90deg, #14121f, #2a2234 8%, #54405a 22%, #6a506c 32%, #c9b8cc 40%, #cdbdd1 80%, #a797ac 86%, #9c8ba4 94%, #2a2234 96%, #2a2234);
}

.start {
    width: 56px;
    padding-right: 4px;
    flex: none;
}

.app {
    width: 58px;
    flex: none;
    border: 1px solid #a89cae;
    border-radius: 3px;
    background: linear-gradient(135deg, rgba(255, 255, 255, .55), rgba(255, 255, 255, .25) 50%, rgba(255, 255, 255, .12) 51%);
}

.app.current {
    border-color: #fff;
    background: linear-gradient(135deg, #e9e4ec, #bcb0c0);
}

.tiny {
    font: bold 8px "Liberation Mono", monospace;
}

.desk {
    margin-left: -4px;
    width: 142px;
    overflow: hidden;
    flex: none;
}

.haze {
    flex: 1;
    padding-left: 194px;
}

.tray {
    display: flex;
    align-items: center;
    gap: 8px;
    color: #fff;
}

.tray time {
    width: 68px;
    text-align: center;
    font: 13px/18px "Open Sans", sans-serif;
}

.showdesk {
    align-self: stretch;
    width: 14px;
    border: 1px solid #8b8594;
    background: #554d60;
}
```
FILE: script.js
```javascript
// row number, column A, column B (array = wrapped lines)
const data = [
    [37, "字符", "白色字符"],
    [38, "阻焊", "绿色"],
    [39, "层压不可更改", "√"],
    [40, "最小线宽", "4"],
    [41, "最小线距", "4"],
    [42, "合拼板数", "1种相同"],
    [43, "钻孔孔径", "0.2"],
    [44, "孔到线间距", "8"],
    [45, "厚径比", "12"],
    [46, "压合次数", "1"],
    [47, "新技术", "客户要求-非导电树脂塞孔"],
    [48, "总孔数", "4503"],
    [49, "翘曲度", "0.75"],
    [50, "限制批量", "√"],
    [51, "限制批量备注", "★限制批量:厚径比＞10"],
    [52, "大料拼的交货单元数", "36"],
    [53, "开料板材资料", "开料板材资料"],
    [54, "层", ["顶铜厚度--底铜厚度--含铜板厚--不含铜厚--顶残铜率--底残铜率--板材类型", "--DK--配本结构--铜箔类型"]],
    [55, "(2/3)", ["【0.500】【0.500】【2.200】【■■■■】【79.000】【99.990】【IT-180A", "】【■■■■】【■■■■】【■■■■】"]],
    [56, "层压叠层结构", "层压叠层结构---RC(%)---铜箔类型"],
    [57, "01", "0.5"],
    [58, "02", "1080-IT-180A"],
    [59, "03", "2/3L"],
    [60, "04", "0.5"],
    [61, "关键物料【类型】", ["-----物料编码----------经长-----纬长-----物料名称-----板厚-----顶铜", "厚-----底铜厚-----PP型号"]],
    [62, "【P片】", ["【600300100042】【0】【49.5】【IT-180A】【■■】【■■】【■■】【", "1080】"]],
    [63, "【刚性板材】", "【600100101732】【37】【49】【IT-180A】【2.2】【0.5】【0.5】【■■】"],
    [64, "【铜箔】", ["【600400200022】【■■】【■■】【PLS】【■■】【0.5】【■■】【■■", "】"]]
];
for (let n = 65; n <= 73; n++) {
    data.push([n, "", ""]);
}

const letters = "ABCDEFGHIJKLMNOPQR".split("");

// half-width runs get their own faces so they keep to half a Chinese character
function markup(text) {
    return text.replace(/[0-9]+|[!-\/:-~]+/g, run =>
        `<span class="${/[0-9]/.test(run) ? "digits" : "ascii"}">${run}</span>`);
}

let cols = '<col class="c-num"><col class="c-a"><col class="c-b">';
let heads = '<th aria-label="全选"></th>';
letters.forEach((letter, i) => {
    if (i > 1) cols += '<col class="c-std">';
    heads += `<th${letter === "B" ? ' class="sel"' : ""}>${letter}</th>`;
});
document.getElementById("cols").innerHTML = cols + "<col>";
document.getElementById("heads").innerHTML = heads + "<th></th>";

let rows = "";
for (const [n, a, b] of data) {
    const rowClass = (n < 65 ? "filled" : "") + (Array.isArray(b) ? " double" : "");
    const lines = [].concat(b).map(markup).join("<br>");
    rows += `<tr class="${rowClass}">`;
    rows += `<th${n === 65 ? ' class="sel"' : ""}>${n}</th>`;
    rows += `<td class="box${n >= 57 && n <= 60 ? " astext" : ""}">${markup(a)}</td>`;
    rows += `<td class="box${n === 65 ? " cursor" : ""}">${lines}</td>`;
    rows += "<td></td>".repeat(letters.length - 1) + "</tr>";
}
document.getElementById("rows").innerHTML = rows;
```
